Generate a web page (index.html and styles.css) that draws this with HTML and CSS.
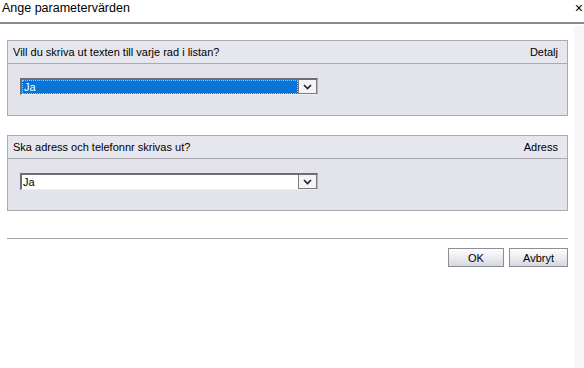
FILE: index.html
```html
<!DOCTYPE html>
<html>
<head>
<meta charset="utf-8">
<link rel="stylesheet" href="styles.css">
</head>
<body>
<div class="dialog">
  <div class="titlebar">
    <span class="title">Ange parametervärden</span>
    <span class="close">×</span>
  </div>
  <div class="content">
    <div class="panel">
      <div class="panel-head">
        <span>Vill du skriva ut texten till varje rad i listan?</span>
        <span>Detalj</span>
      </div>
      <div class="panel-body">
        <div class="combo">
          <div class="combo-value selected">Ja</div>
          <div class="combo-btn"><svg width="9" height="6" viewBox="0 0 9 6"><path d="M1 1 L4.5 4.5 L8 1" fill="none" stroke="#222" stroke-width="1.6"/></svg></div>
        </div>
      </div>
    </div>
    <div class="panel">
      <div class="panel-head">
        <span>Ska adress och telefonnr skrivas ut?</span>
        <span>Adress</span>
      </div>
      <div class="panel-body">
        <div class="combo">
          <div class="combo-value">Ja</div>
          <div class="combo-btn"><svg width="9" height="6" viewBox="0 0 9 6"><path d="M1 1 L4.5 4.5 L8 1" fill="none" stroke="#222" stroke-width="1.6"/></svg></div>
        </div>
      </div>
    </div>
    <div class="divider"></div>
    <div class="buttons">
      <button class="btn btn-ok">OK</button>
      <button class="btn btn-cancel">Avbryt</button>
    </div>
  </div>
  <div class="scrollbar"></div>
</div>
</body>
</html>
```
FILE: styles.css
```css
html, body {
  margin: 0;
  padding: 0;
  background: #ffffff;
  font-family: "Liberation Sans", Arial, sans-serif;
  font-size: 11px;
  color: #000;
}
.dialog {
  position: relative;
  width: 584px;
  height: 368px;
  overflow: hidden;
}
.titlebar {
  border-bottom: 2px solid #8c8c8c;
  display: flex;
  justify-content: space-between;
  align-items: flex-start;
  padding: 1px 0 0 2px;
  box-sizing: border-box;
  height: 24px;
}
.title {
  font-size: 12.5px;
  line-height: 14px;
}
.close {
  font-size: 14px;
  line-height: 14px;
  margin-right: 1px;
}
.content {
  padding: 16px 16px 0 7px;
}
.panel {
  border: 1px solid #a9a9b0;
  background: #e3e3eb;
  margin-bottom: 19px;
}
.panel-head {
  height: 22px;
  border-bottom: 1px solid #a9a9b0;
  background: #e6e6ee;
  display: flex;
  justify-content: space-between;
  align-items: center;
  padding: 0 9px 0 5px;
}
.panel-body {
  height: 51px;
  padding: 14px 0 0 12px;
  box-sizing: border-box;
}
.combo {
  width: 298px;
  height: 17px;
  display: flex;
  border-top: 2px solid #6e6e6e;
  border-left: 2px solid #6e6e6e;
  border-right: 1px solid #b8b8b8;
  border-bottom: 1px solid #f0f0f0;
  box-sizing: border-box;
  background: #fff;
}
.combo-value {
  flex: 1;
  line-height: 14px;
  padding-left: 1px;
  color: #000;
}
.combo-value.selected {
  background: #0a74d6;
  color: #fff;
  border: 1px dotted #9bc7f0;
  line-height: 12px;
}
.combo-btn {
  width: 17px;
  border: 1px solid #7a7a7a;
  border-top: none;
  background: #f4f4f6;
  display: flex;
  align-items: center;
  justify-content: center;
}
.divider {
  margin-top: 27px;
  border-top: 1px solid #a0a0a0;
  width: 561px;
}
.buttons {
  display: flex;
  justify-content: flex-end;
  gap: 5px;
  width: 561px;
  margin-top: 9px;
}
.btn {
  height: 19px;
  border: 1px solid #8e8e96;
  background: linear-gradient(#ffffff, #e8e8ee 60%, #d6d6de);
  font-family: "Liberation Sans", Arial, sans-serif;
  font-size: 11px;
  padding: 0;
  color: #000;
}
.btn-ok { width: 56px; }
.btn-cancel { width: 59px; }
.scrollbar {
  position: absolute;
  right: 0;
  top: 26px;
  width: 10px;
  bottom: 0;
  background: #f7f7f7;
}
```
